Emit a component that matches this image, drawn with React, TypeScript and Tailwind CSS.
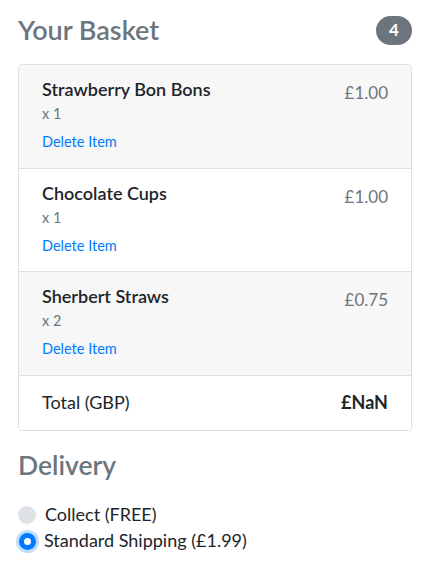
import React from "react";

const items = [
  { name: "Strawberry Bon Bons", qty: 1, price: "£1.00", gray: true, pb: "pb-[16px]" },
  { name: "Chocolate Cups", qty: 1, price: "£1.00", gray: false, pb: "pb-[15px]" },
  { name: "Sherbert Straws", qty: 2, price: "£0.75", gray: true, pb: "pb-[16px]" },
];

export default function App() {
  return (
    <div
      className="bg-white min-h-[569px] pl-[18px] pr-[19px] pt-[13px] text-[#212529]"
      style={{ fontFamily: 'Lato, "Open Sans", sans-serif' }}
    >
      <div className="flex items-center justify-between h-[34px]">
        <h3 className="text-[27px] leading-[34px] font-semibold text-[#6c757d]">Your Basket</h3>
        <span className="w-[36px] h-[29px] rounded-full bg-[#6c757d] text-white font-bold text-[17px] flex items-center justify-center">
          4
        </span>
      </div>

      <div className="mt-[17px] border border-[#dfdfdf] rounded-[4px] overflow-hidden">
        {items.map((it, i) => (
          <div
            key={it.name}
            className={
              "flex justify-between pl-[23px] pr-[23px] pt-[12px] " +
              it.pb +
              " " +
              (i > 0 ? "border-t border-[#dfdfdf] " : "") +
              (it.gray ? "bg-[#f7f7f7]" : "bg-white")
            }
          >
            <div className="flex flex-col">
              <div className="text-[18px] leading-[24px] font-semibold">{it.name}</div>
              <div className="mt-[3px] text-[14.5px] leading-[20px] text-[#6c757d]">x {it.qty}</div>
              <a className="mt-[8px] text-[14.5px] leading-[20px] text-[#007bff] cursor-pointer">Delete Item</a>
            </div>
            <div className="mt-[4px] text-[17px] leading-[24px] text-[#6c757d]">{it.price}</div>
          </div>
        ))}
        <div className="flex justify-between px-[23px] pt-[14px] pb-[16px] border-t border-[#dfdfdf] bg-white">
          <span className="text-[18px] leading-[24px]">Total (GBP)</span>
          <strong className="text-[18px] leading-[24px] font-bold">£NaN</strong>
        </div>
      </div>

      <h4 className="mt-[18px] text-[26.5px] leading-[32px] font-semibold text-[#6c757d]">Delivery</h4>

      <div className="mt-[20px] flex flex-col">
        <label className="flex items-center h-[26px] text-[18px] leading-[26px]">
          <span className="w-[18px] h-[18px] rounded-full bg-[#dee2e6] shrink-0 mt-[2px]" />
          <span className="ml-[9px]">Collect (FREE)</span>
        </label>
        <label className="flex items-center h-[26px] text-[18px] leading-[26px]">
          <span className="ml-[1px] w-[17px] h-[17px] rounded-full bg-[#007bff] shrink-0 mt-[2px] flex items-center justify-center ring-[3px] ring-[#bfdeff]">
            <span className="w-[7px] h-[7px] rounded-full bg-white" />
          </span>
          <span className="ml-[8px]">Standard Shipping (£1.99)</span>
        </label>
      </div>
    </div>
  );
}
